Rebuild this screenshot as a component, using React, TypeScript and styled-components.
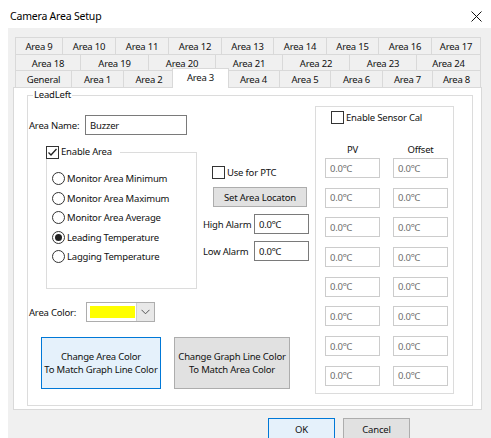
import React from "react"
import styled, { createGlobalStyle } from "styled-components"

const GlobalStyle = createGlobalStyle`
  html, body {
    margin: 0;
    padding: 0;
    background: #fff;
  }
  body {
    width: 491px;
    height: 438px;
    overflow: hidden;
    font-family: "Noto Sans", "DejaVu Sans", sans-serif;
    font-size: 9.5px;
    letter-spacing: -0.2px;
    color: #111;
  }
  * {
    box-sizing: border-box;
  }
`

const Window = styled.div`
  width: 491px;
  height: 438px;
  display: flex;
  flex-direction: column;
  overflow: hidden;
`

const TitleBar = styled.div`
  height: 28px;
  flex: none;
  display: flex;
  align-items: center;
  justify-content: space-between;
  padding: 4px 9px 0 10px;
`

const Title = styled.span`
  font-size: 10.5px;
  color: #000;
`

const Client = styled.div`
  flex: 1;
  margin-left: 8px;
  background: #f0f0f0;
  padding: 9px 0 0 5px;
  display: flex;
  flex-direction: column;
`

const TabStrip = styled.div`
  margin-left: 2px;
  width: 466px;
  display: flex;
  flex-direction: column;
`

const TabRow = styled.div<{ $h: number }>`
  display: flex;
  height: ${(p) => p.$h}px;
`

const Tab = styled.div<{ $w: number; $active?: boolean }>`
  width: ${(p) => p.$w}px;
  flex: none;
  display: flex;
  align-items: center;
  justify-content: center;
  padding-top: 1px;
  border: 1px solid #d9d9d9;
  border-bottom: none;
  border-right: none;
  background: #f0f0f0;
  white-space: nowrap;

  &:last-child {
    border-right: 1px solid #d9d9d9;
  }

  ${(p) =>
    p.$active &&
    `
    position: relative;
    z-index: 1;
    background: #fff;
    margin: -2px -2px -1px;
    width: ${p.$w + 4}px;
    padding: 0 0 3px;
    border-right: 1px solid #d9d9d9;
  `}
`

const Panel = styled.div`
  width: 469px;
  height: 323px;
  border: 1px solid #d9d9d9;
  background: #fff;
  padding: 0 8px 4px 13px;
`

const Group = styled.fieldset`
  margin: 0;
  padding: 0;
  min-width: 0;
  border: 1px solid #dcdcdc;
`

const LeadGroup = styled(Group)`
  height: 318px;
`

const Legend = styled.legend`
  margin-left: 5px;
  padding: 0 1px;
  line-height: 14px;
`

const GroupBody = styled.div`
  display: flex;
  align-items: flex-start;
  padding-left: 1px;
`

const LeftColumn = styled.div`
  width: 281px;
  flex: none;
  display: flex;
  flex-direction: column;
`

const FieldRow = styled.div<{ $top: number }>`
  display: flex;
  align-items: center;
  margin-top: ${(p) => p.$top}px;
`

const Label = styled.span<{ $w: number }>`
  width: ${(p) => p.$w}px;
  flex: none;
  white-space: nowrap;
`

const TextBox = styled.div<{ $w: number; $dim?: boolean }>`
  width: ${(p) => p.$w}px;
  height: 20px;
  flex: none;
  display: flex;
  align-items: center;
  padding-left: 4px;
  background: #fff;
  border: 1px solid ${(p) => (p.$dim ? "#cccccc" : "#7a7a7a")};
  color: ${(p) => (p.$dim ? "#6d6d6d" : "#111")};
  white-space: nowrap;
`

const MidRow = styled.div`
  display: flex;
  align-items: flex-start;
  margin-top: 10px;
  margin-left: 17px;
`

const EnableGroup = styled(Group)`
  width: 151px;
  height: 144px;
`

const CheckLegend = styled.legend`
  margin-left: -1px;
  padding: 0 8px 0 0;
  line-height: 14px;
`

const RadioList = styled.div`
  display: flex;
  flex-direction: column;
  padding: 10px 0 0 5px;
`

const Option = styled.label`
  display: flex;
  align-items: center;
  height: 19.5px;
  white-space: nowrap;
`

const Box = styled.span`
  width: 13px;
  height: 13px;
  flex: none;
  display: inline-flex;
  align-items: center;
  justify-content: center;
  border: 1px solid #333;
  background: #fff;
  margin-right: 2px;
`

const Round = styled.span<{ $on?: boolean }>`
  width: 13px;
  height: 13px;
  flex: none;
  border: 1px solid #333;
  border-radius: 50%;
  background: #fff;
  margin-right: 2px;
  display: inline-flex;
  align-items: center;
  justify-content: center;

  &::after {
    content: "";
    width: 7px;
    height: 7px;
    border-radius: 50%;
    background: ${(p) => (p.$on ? "#222" : "transparent")};
  }
`

const CheckLine = styled.label<{ $top: number; $left: number }>`
  display: flex;
  align-items: center;
  height: 14px;
  margin-top: ${(p) => p.$top}px;
  margin-left: ${(p) => p.$left}px;
  white-space: nowrap;
`

const PtcColumn = styled.div`
  width: 107px;
  flex: none;
  margin-left: 6px;
  display: flex;
  flex-direction: column;
`

const PushButton = styled.button<{ $w: number; $h: number; $focus?: boolean }>`
  width: ${(p) => p.$w}px;
  height: ${(p) => p.$h}px;
  flex: none;
  padding: 0;
  font: inherit;
  letter-spacing: inherit;
  color: #111;
  line-height: 13px;
  text-align: center;
  white-space: nowrap;
  background: ${(p) => (p.$focus ? "#e5f1fb" : "#e1e1e1")};
  border: 1px solid ${(p) => (p.$focus ? "#0078d7" : "#adadad")};
`

const ColorCombo = styled.div`
  width: 69px;
  height: 20px;
  flex: none;
  display: flex;
  align-items: stretch;
  border: 1px solid #adadad;
  background: #fff;
`

const Swatch = styled.div<{ $color: string }>`
  flex: 1;
  margin: 3px 1px 3px 3px;
  background: ${(p) => p.$color};
`

const DropButton = styled.div`
  width: 18px;
  flex: none;
  display: flex;
  align-items: center;
  justify-content: center;
  background: #e8e8e8;
  border-left: 1px solid #d0d0d0;
`

const ButtonRow = styled.div`
  display: flex;
  gap: 13px;
  margin-top: 15px;
  margin-left: 12px;
`

const SensorGroup = styled.div`
  width: 139px;
  height: 288px;
  flex: none;
  margin: 4px 0 0 5px;
  border: 1px solid #dcdcdc;
  display: flex;
  flex-direction: column;
`

const SensorGrid = styled.div<{ $top: number; $gap: number }>`
  display: grid;
  grid-template-columns: 55px 55px;
  column-gap: 13px;
  row-gap: ${(p) => p.$gap}px;
  margin: ${(p) => p.$top}px 0 0 9px;
`

const ColumnHead = styled.span`
  text-align: center;
  line-height: 14px;
`

const Footer = styled.div`
  display: flex;
  gap: 8px;
  margin-top: 8px;
  padding-left: 255px;
`

const tabRows: { h: number; tabs: [string, number][] }[] = [
  {
    h: 17,
    tabs: [
      ["Area 9", 47], ["Area 10", 53], ["Area 11", 53], ["Area 12", 53], ["Area 13", 52],
      ["Area 14", 53], ["Area 15", 52], ["Area 16", 53], ["Area 17", 50],
    ],
  },
  {
    h: 16,
    tabs: [
      ["Area 18", 65], ["Area 19", 68], ["Area 20", 67], ["Area 21", 67],
      ["Area 22", 67], ["Area 23", 67], ["Area 24", 65],
    ],
  },
  {
    h: 17,
    tabs: [
      ["General", 56], ["Area 1", 52], ["Area 2", 51], ["Area 3", 53], ["Area 4", 52],
      ["Area 5", 51], ["Area 6", 52], ["Area 7", 50], ["Area 8", 49],
    ],
  },
]

const modes = [
  "Monitor Area Minimum",
  "Monitor Area Maximum",
  "Monitor Area Average",
  "Leading Temperature",
  "Lagging Temperature",
]

const Check: React.FC<{ on?: boolean }> = ({ on }) => (
  <Box>
    {on && (
      <svg width="11" height="11" viewBox="0 0 11 11">
        <polyline points="1.5,5.5 4,8 9.5,2" fill="none" stroke="#222" strokeWidth="1.3" />
      </svg>
    )}
  </Box>
)

const CloseIcon = () => (
  <svg width="11" height="11" viewBox="0 0 11 11">
    <path d="M0.5 0.5 L10.5 10.5 M10.5 0.5 L0.5 10.5" stroke="#111" strokeWidth="1" />
  </svg>
)

const Chevron = () => (
  <svg width="9" height="6" viewBox="0 0 9 6">
    <polyline points="0.5,0.8 4.5,4.8 8.5,0.8" fill="none" stroke="#555" strokeWidth="1" />
  </svg>
)

const App: React.FC = () => {
  const active = "Area 3"
  const selectedMode = "Leading Temperature"

  return (
    <Window>
      <GlobalStyle />
      <TitleBar>
        <Title>Camera Area Setup</Title>
        <CloseIcon />
      </TitleBar>

      <Client>
        <TabStrip>
          {tabRows.map((row, i) => (
            <TabRow key={i} $h={row.h}>
              {row.tabs.map(([name, w]) => (
                <Tab key={name} $w={w} $active={name === active}>
                  {name}
                </Tab>
              ))}
            </TabRow>
          ))}
        </TabStrip>

        <Panel>
          <LeadGroup>
            <Legend>LeadLeft</Legend>
            <GroupBody>
              <LeftColumn>
                <FieldRow $top={13}>
                  <Label $w={56}>Area Name:</Label>
                  <TextBox $w={102}>Buzzer</TextBox>
                </FieldRow>

                <MidRow>
                  <EnableGroup>
                    <CheckLegend>
                      <CheckLine $top={0} $left={0}>
                        <Check on />
                        Enable Area
                      </CheckLine>
                    </CheckLegend>
                    <RadioList>
                      {modes.map((m) => (
                        <Option key={m}>
                          <Round $on={m === selectedMode} />
                          {m}
                        </Option>
                      ))}
                    </RadioList>
                  </EnableGroup>

                  <PtcColumn>
                    <CheckLine $top={20} $left={9}>
                      <Check />
                      Use for PTC
                    </CheckLine>
                    <FieldRow $top={8}>
                      <Label $w={10} />
                      <PushButton $w={94} $h={20}>Set Area Locaton</PushButton>
                    </FieldRow>
                    <FieldRow $top={7}>
                      <Label $w={51}>High Alarm</Label>
                      <TextBox $w={55}>0.0℃</TextBox>
                    </FieldRow>
                    <FieldRow $top={7}>
                      <Label $w={51}>Low Alarm</Label>
                      <TextBox $w={55}>0.0℃</TextBox>
                    </FieldRow>
                  </PtcColumn>
                </MidRow>

                <FieldRow $top={13}>
                  <Label $w={57}>Area Color:</Label>
                  <ColorCombo>
                    <Swatch $color="#ffff00" />
                    <DropButton>
                      <Chevron />
                    </DropButton>
                  </ColorCombo>
                </FieldRow>

                <ButtonRow>
                  <PushButton $w={120} $h={52} $focus>
                    Change Area Color
                    <br />
                    To Match Graph Line Color
                  </PushButton>
                  <PushButton $w={116} $h={52}>
                    Change Graph Line Color
                    <br />
                    To Match Area Color
                  </PushButton>
                </ButtonRow>
              </LeftColumn>

              <SensorGroup>
                <CheckLine $top={3} $left={15}>
                  <Check />
                  Enable Sensor Cal
                </CheckLine>
                <SensorGrid $top={19} $gap={0}>
                  <ColumnHead>PV</ColumnHead>
                  <ColumnHead>Offset</ColumnHead>
                </SensorGrid>
                <SensorGrid $top={1} $gap={9.7}>
                  {Array.from({ length: 16 }, (_, i) => (
                    <TextBox key={i} $w={55} $dim>
                      0.0℃
                    </TextBox>
                  ))}
                </SensorGrid>
              </SensorGroup>
            </GroupBody>
          </LeadGroup>
        </Panel>

        <Footer>
          <PushButton $w={67} $h={23} $focus>
            OK
          </PushButton>
          <PushButton $w={67} $h={23}>
            Cancel
          </PushButton>
        </Footer>
      </Client>
    </Window>
  )
}

export default App
